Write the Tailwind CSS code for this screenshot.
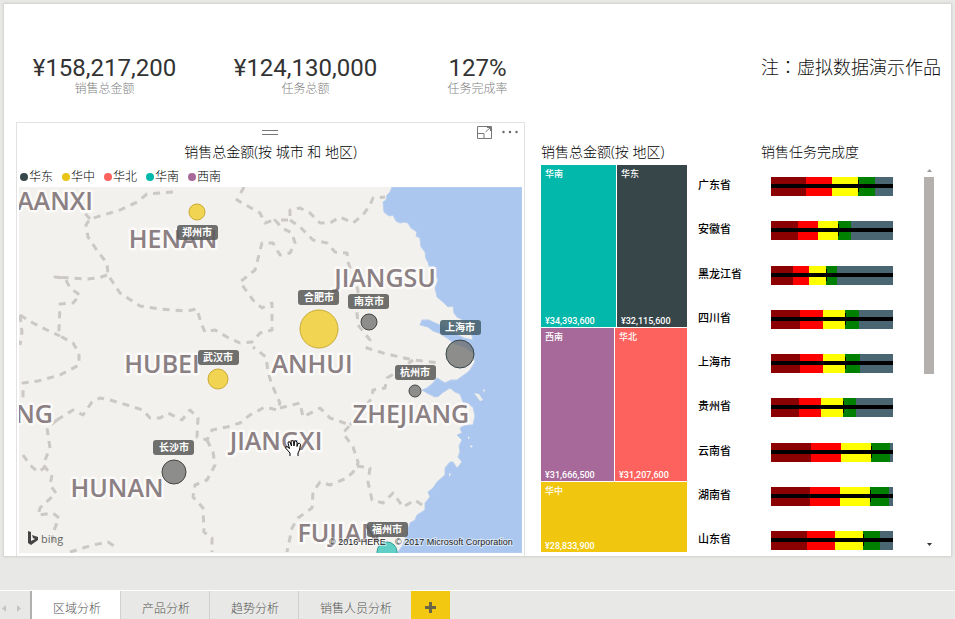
<!DOCTYPE html>
<html lang="zh-CN">
<head>
  <meta charset="UTF-8" />
  <meta name="viewport" content="width=device-width, initial-scale=1.0" />
  <title>区域分析</title>
  <script src="https://cdn.jsdelivr.net/npm/@tailwindcss/browser@4"></script>
</head>
<body class="min-h-screen flex flex-col bg-[#e8e8e6] font-['Open_Sans','Noto_Sans_CJK_SC',sans-serif] text-black">

  <!-- Report page -->
  <main class="flex-1 flex flex-col mx-1 mt-1 mb-[34px] bg-white shadow-[0_0_2px_1px_#cfcfcd]">

    <!-- KPI cards -->
    <header class="flex items-start justify-between pt-[50px] pb-[26px] pr-2.5">
      <div class="flex text-center">
        <div class="w-[201px]">
          <p class="font-['Roboto',sans-serif] text-[24px] leading-7 text-[#333]">¥158,217,200</p>
          <p class="font-light text-[12px] leading-[14px] text-[#808080]">销售总金额</p>
        </div>
        <div class="w-[201px]">
          <p class="font-['Roboto',sans-serif] text-[24px] leading-7 text-[#333]">¥124,130,000</p>
          <p class="font-light text-[12px] leading-[14px] text-[#808080]">任务总额</p>
        </div>
        <div class="w-[143px]">
          <p class="font-['Roboto',sans-serif] text-[24px] leading-7 text-[#333]">127%</p>
          <p class="font-light text-[12px] leading-[14px] text-[#808080]">任务完成率</p>
        </div>
      </div>
      <p class="font-light text-[18px] leading-6 text-[#111]">注<span lang="zh-TW" class="font-['Noto_Sans_CJK_TC',sans-serif]">：</span>虚拟数据演示作品</p>
    </header>

    <div class="flex-1 flex pl-3">

      <!-- Map -->
      <section class="flex-1 flex flex-col border border-b-0 border-[#e2e2e2] px-0.5 pb-[3px]">
        <div class="grid grid-cols-3 items-center h-[18px]">
          <span></span>
          <svg class="justify-self-center" width="16" height="5" viewBox="0 0 16 5" stroke="#777"><path d="M0 .5h16M0 4.5h16" /></svg>
          <div class="flex justify-self-end items-center gap-2.5 pr-1">
            <button aria-label="焦点模式">
              <svg width="15" height="13" viewBox="0 0 15 13" fill="none" stroke="#777"><path d="M.5 12.5V.5h14v12zM.5 7.500h6.500v5M8.500 6l5.500-5M10 1.500h3.500v3.500" /></svg>
            </button>
            <button aria-label="更多选项">
              <svg width="16" height="4" viewBox="0 0 16 4" fill="#666"><circle cx="1.500" cy="2" r="1.200" /><circle cx="8" cy="2" r="1.200" /><circle cx="14.500" cy="2" r="1.200" /></svg>
            </button>
          </div>
        </div>
        <h2 class="font-light text-[14px] leading-[18px] text-center mt-0.5">销售总金额(按 城市 和 地区)</h2>
        <ul class="flex gap-[9px] pl-px pt-2 pb-0.5 font-light text-[12px] leading-4">
          <li class="flex items-center gap-px"><span class="size-2 rounded-full bg-[#374649]"></span>华东</li>
          <li class="flex items-center gap-px"><span class="size-2 rounded-full bg-[#e8c414]"></span>华中</li>
          <li class="flex items-center gap-px"><span class="size-2 rounded-full bg-[#fd625e]"></span>华北</li>
          <li class="flex items-center gap-px"><span class="size-2 rounded-full bg-[#01b8aa]"></span>华南</li>
          <li class="flex items-center gap-px"><span class="size-2 rounded-full bg-[#a66999]"></span>西南</li>
        </ul>

        <div class="relative flex-1 min-h-[366px] bg-[#f2f1ed]">
          <svg class="absolute inset-0 size-full" viewBox="0 0 503 366" preserveAspectRatio="xMidYMid slice">
            <!-- sea -->
            <path fill="#abc7ef" stroke="#b9cfee" d="M373 0L371 5L368 8L367 13L364 15L365 25L370 29L374 28L377 34L381 36L385 35L389 36L392 41L398 45L397 49L401 51L402 60L406 65L407 72L409 75L411 82L414 83L419 93L416 101L418 110L424 115L429 120L434 119L435 126L438 130L444 133L451 141L454 153L445 151L435 146L428 141L421 138L414 135L410 133L403 133L401 138L409 140L414 144L420 146L428 151L436 157L446 160L454 166L456 175L451 183L449 185L438 193L432 193L426 196L418 191L414 196L408 201L403 203L408 206L416 210L420 209L423 206L431 201L436 205L441 207L444 215L449 217L454 220L456 229L454 238L446 238L441 241L443 246L438 248L443 253L440 259L441 265L439 270L443 275L438 281L434 275L431 275L426 281L426 288L418 295L414 301L409 305L411 310L406 316L406 323L398 328L396 333L391 336L388 345L384 358L378 366L503 366L503 0Z" />
            <g fill="#eeeee9">
              <path d="M455 206l5 1 4 6-3 1zM464 202l2 1-1 3zM451 258l3 1-2 2zM430 286l2 1-2 3zM449 249l2 2-2 1z" />
            </g>

            <!-- province borders -->
            <g fill="none" stroke="#cbc8c5" stroke-width="3" stroke-dasharray="7 6" stroke-linejoin="round">
              <path d="M154 5L128 7L118 15L101 23L71 32L67 38L69 50L79 65L88 76L89 88L101 106L121 119L141 122L168 124L178 122L182 136L186 145L196 143L208 150L221 156L233 155L241 146L253 143L253 116L243 121L234 113L221 95L236 83L243 56L254 56L261 68L271 66L276 56L273 46L263 41L256 33L271 33L271 23L281 21L291 26L301 36L311 36L321 30L334 36L344 28L351 18L354 11L366 10" />
              <path d="M225 0L218 13L241 26L246 36L258 32M71 32L62 22L70 0" />
              <path d="M271 33L281 40L294 53L308 56L316 65L328 66L329 75L339 103L338 126L339 138L351 153L348 161L364 166L381 170L394 173L421 176" />
              <path d="M88 88L79 91L68 92L36 90L46 91L51 101L61 108L54 116L41 117L40 143L41 149L54 156L60 166L60 178L41 188L19 194L4 196L4 213" />
              <path d="M1 128L14 136L28 143L41 149M1 128L3 145L1 158" />
              <path d="M38 233L54 223L64 228L73 215L81 211L91 213L108 218L124 223L131 231L141 231L149 226L163 233L171 223L179 231L178 250L188 253L193 243L208 240L221 236L231 228L246 220L258 223L261 216L253 198L249 185L247 170L234 160" />
              <path d="M188 253L194 265L196 278L188 293L176 298L174 310L184 321L185 345L193 351L193 365" />
              <path d="M38 233L28 241L31 261L24 278L33 288L31 298L37 306L21 321L19 328L34 326L40 331L33 348L36 360M4 268L11 278L19 285L30 278M51 365L64 361L74 358L89 355L98 361" />
              <path d="M261 221L281 216L284 230L301 221L311 231L331 238L324 246L334 260L339 275L338 281L328 291L311 298L301 295L294 305L293 321L279 331L273 341L268 365" />
              <path d="M338 279L351 281L349 295L353 313L364 316L374 306L384 320L396 313L406 320M331 238L353 211L354 203L366 201L368 191L378 185L394 173" />
            </g>

            <!-- province names -->
            <g class="font-['Open_Sans',sans-serif] font-semibold text-[25px]" fill="#8b8083" stroke="#fbfaf8" stroke-width="5" stroke-linejoin="round" paint-order="stroke" text-anchor="middle">
              <text x="36" y="23">AANXI</text>
              <text x="154" y="61">HENAN</text>
              <text x="366" y="100">JIANGSU</text>
              <text x="143" y="186">HUBEI</text>
              <text x="293" y="186">ANHUI</text>
              <text x="392" y="236">ZHEJIANG</text>
              <text x="15" y="236">NG</text>
              <text x="257" y="263">JIANGXI</text>
              <text x="98" y="310">HUNAN</text>
              <text x="320" y="355">FUJIAN</text>
            </g>

            <!-- sales bubbles -->
            <g fill-opacity=".75">
              <circle cx="178" cy="25" r="8" fill="#f2c811" fill-opacity=".7" stroke="#c9ab35" />
              <circle cx="300" cy="142" r="19" fill="#f2c811" fill-opacity=".7" stroke="#c9ab35" />
              <circle cx="199" cy="192" r="10" fill="#f2c811" fill-opacity=".7" stroke="#c9ab35" />
              <circle cx="350" cy="135" r="8" fill="#6b6b6b" stroke="#444" />
              <circle cx="441" cy="167" r="14" fill="#6b6b6b" stroke="#374649" />
              <circle cx="396" cy="204" r="6" fill="#6b6b6b" stroke="#444" />
              <circle cx="155" cy="285" r="12" fill="#6b6b6b" stroke="#444" />
              <circle cx="368" cy="365" r="10" fill="#2fc4b8" stroke="#2a9f96" />
            </g>

            <!-- city tags -->
            <g fill="#5c5c5c" fill-opacity=".88">
              <rect x="158" y="38" width="41" height="15" rx="3" />
              <rect x="279" y="103" width="41" height="15" rx="3" />
              <rect x="329" y="107" width="41" height="15" rx="3" />
              <rect x="421" y="133" width="41" height="15" rx="3" fill="#44606c" />
              <rect x="179" y="163" width="41" height="15" rx="3" />
              <rect x="376" y="178" width="41" height="15" rx="3" />
              <rect x="134" y="253" width="41" height="15" rx="3" />
              <rect x="348" y="335" width="41" height="15" rx="3" />
            </g>
            <g class="font-['Noto_Sans_CJK_SC',sans-serif] font-bold text-[10px]" fill="#fff" text-anchor="middle">
              <text x="178" y="49">郑州市</text>
              <text x="300" y="114">合肥市</text>
              <text x="350" y="118">南京市</text>
              <text x="441" y="144">上海市</text>
              <text x="199" y="174">武汉市</text>
              <text x="396" y="189">杭州市</text>
              <text x="155" y="264">长沙市</text>
              <text x="368" y="346">福州市</text>
            </g>

            <!-- grab cursor -->
            <path transform="translate(266 252)" fill="#fff" stroke="#000" stroke-linejoin="round" d="M5 17V14L1 9.500Q0 7.500 2 7.500L4.500 9.500L3 4Q3 2 5 3L6.500 7L6 2.500Q7 .5 8.500 2.500L9 7L9.500 2.500Q11 1 12 3V7.500L13 4.500Q15 3.500 15.500 5.500L14.500 11L13 14V17" />

            <!-- bing -->
            <path fill="#444" d="M9 344l3 1v9l4-2-2-1-1-3 6 2v3l-7 5-3-2z" />
            <text class="font-['Open_Sans',sans-serif] text-[11px]" x="22" y="356" fill="#666">bing</text>
            <g class="font-['Liberation_Sans',sans-serif] text-[9px]" fill="#222" stroke="#fff" stroke-opacity=".5" stroke-width="2" paint-order="stroke">
              <text x="310" y="358">© 2016 HERE</text>
              <text x="376" y="358">© 2017 Microsoft Corporation</text>
            </g>
          </svg>
        </div>
      </section>

      <!-- Treemap -->
      <section class="w-[146px] ml-4 flex flex-col pt-[21px] pb-1">
        <h2 class="font-light text-[14px] leading-[18px] whitespace-nowrap">销售总金额(按 地区)</h2>
        <div class="flex-1 flex flex-col gap-px mt-1 font-medium text-[9px] leading-3 text-white font-['Roboto','Noto_Sans_CJK_SC',sans-serif]">
          <div class="flex gap-px basis-0 grow-[665]">
            <div class="flex flex-col justify-between basis-0 grow-[344] bg-[#01b8aa] pl-1 pt-[3px]"><span>华南</span><span>¥34,393,600</span></div>
            <div class="flex flex-col justify-between basis-0 grow-[321] bg-[#374649] pl-1 pt-[3px]"><span>华东</span><span>¥32,115,600</span></div>
          </div>
          <div class="flex gap-px basis-0 grow-[629]">
            <div class="flex flex-col justify-between basis-0 grow-[317] bg-[#a66999] pl-1 pt-[3px]"><span>西南</span><span>¥31,666,500</span></div>
            <div class="flex flex-col justify-between basis-0 grow-[312] bg-[#fd625e] pl-1 pt-[3px]"><span>华北</span><span>¥31,207,600</span></div>
          </div>
          <div class="flex basis-0 grow-[288]">
            <div class="flex-1 flex flex-col justify-between bg-[#f0c70e] pl-1 pt-[3px]"><span>华中</span><span>¥28,833,900</span></div>
          </div>
        </div>
      </section>

      <!-- Completion by province -->
      <section class="flex flex-col pt-[21px] pl-[11px] pr-[17px]">
        <h2 class="font-light text-[14px] leading-[18px] pl-[63px]">销售任务完成度</h2>
        <div class="flex-1 flex justify-between gap-[31px] pt-2 pb-1.5">
          <ul id="bullets" class="flex flex-col justify-between pt-2"></ul>
          <div class="flex flex-col items-center w-2.5">
            <svg width="5" height="3" viewBox="0 0 5 3" fill="#999"><path d="M0 3L2.500 0L5 3z" /></svg>
            <div class="w-2.5 h-[197px] mt-[5px] bg-[#b3b0ad]"></div>
            <svg class="mt-auto mb-1" width="5" height="3" viewBox="0 0 5 3" fill="#333"><path d="M0 0L2.500 3L5 0z" /></svg>
          </div>
        </div>
      </section>
    </div>
  </main>

  <!-- Page tabs -->
  <nav class="flex h-[29px] border-t border-white text-[12px] text-[#555]">
    <div class="flex items-center gap-[11px] w-[30px] pl-0.5 pt-1.5">
      <button aria-label="上一页"><svg width="4" height="7" viewBox="0 0 4 7" fill="#c4c4c4"><path d="M4 0v7L0 3.500z" /></svg></button>
      <button aria-label="下一页"><svg width="4" height="7" viewBox="0 0 4 7" fill="#c4c4c4"><path d="M0 0v7l4-3.500z" /></svg></button>
    </div>
    <button class="pl-[21px] pr-[19px] pt-2 font-light border-l-2 border-[#b0b0b0] bg-white">区域分析</button>
    <button class="pl-[21px] pr-[19px] pt-2 font-light border-l border-[#d0d0d0]">产品分析</button>
    <button class="pl-[21px] pr-[19px] pt-2 font-light border-l border-[#d0d0d0]">趋势分析</button>
    <button class="pl-[21px] pr-[19px] pt-2 font-light border-l border-[#d0d0d0]">销售人员分析</button>
    <button class="flex items-center justify-center w-[39px] pt-1 bg-[#f2c811]" aria-label="新建页">
      <svg width="11" height="11" viewBox="0 0 11 11" stroke="#6b6547" stroke-width="3"><path d="M5.500 0v11M0 5.500h11" /></svg>
    </button>
  </nav>

  <script>
    // upper bound of each band, in percent of the bar; the third one is also the target
    const rows = [
      ["广东省", 28.4, 49.7, 71.3, 85.5],
      ["安徽省", 22.1, 38.5, 54.6, 65.8],
      ["黑龙江省", 18, 31.4, 45, 54.4],
      ["四川省", 23.8, 42.6, 60.7, 72.4],
      ["上海市", 23.8, 42.6, 60.9, 73],
      ["贵州省", 23, 41, 58.7, 70],
      ["云南省", 32.8, 57.1, 81.7, 97.8],
      ["湖南省", 32.2, 56.6, 80.9, 97],
      ["山东省", 29.5, 52.5, 75.1, 89.6],
    ];

    document.getElementById("bullets").innerHTML = rows.map(([name, a, b, c, d]) => `
      <li class="flex items-start h-[19px]">
        <span class="w-[73px] text-[11px] leading-4 font-medium">${name}</span>
        <div class="relative flex w-[122px] h-[19px] bg-[#4a6672]">
          <div class="bg-[#8b0000]" style="width:${a}%"></div>
          <div class="bg-[#ff0000]" style="width:${b - a}%"></div>
          <div class="bg-[#ffff00]" style="width:${c - b}%"></div>
          <div class="bg-[#008000]" style="width:${d - c}%"></div>
          <div class="absolute inset-x-0 top-[7px] h-1 bg-black"></div>
          <div class="absolute top-[3px] w-px h-3 bg-black" style="left:${c}%"></div>
        </div>
      </li>`).join("");
  </script>
</body>
</html>
